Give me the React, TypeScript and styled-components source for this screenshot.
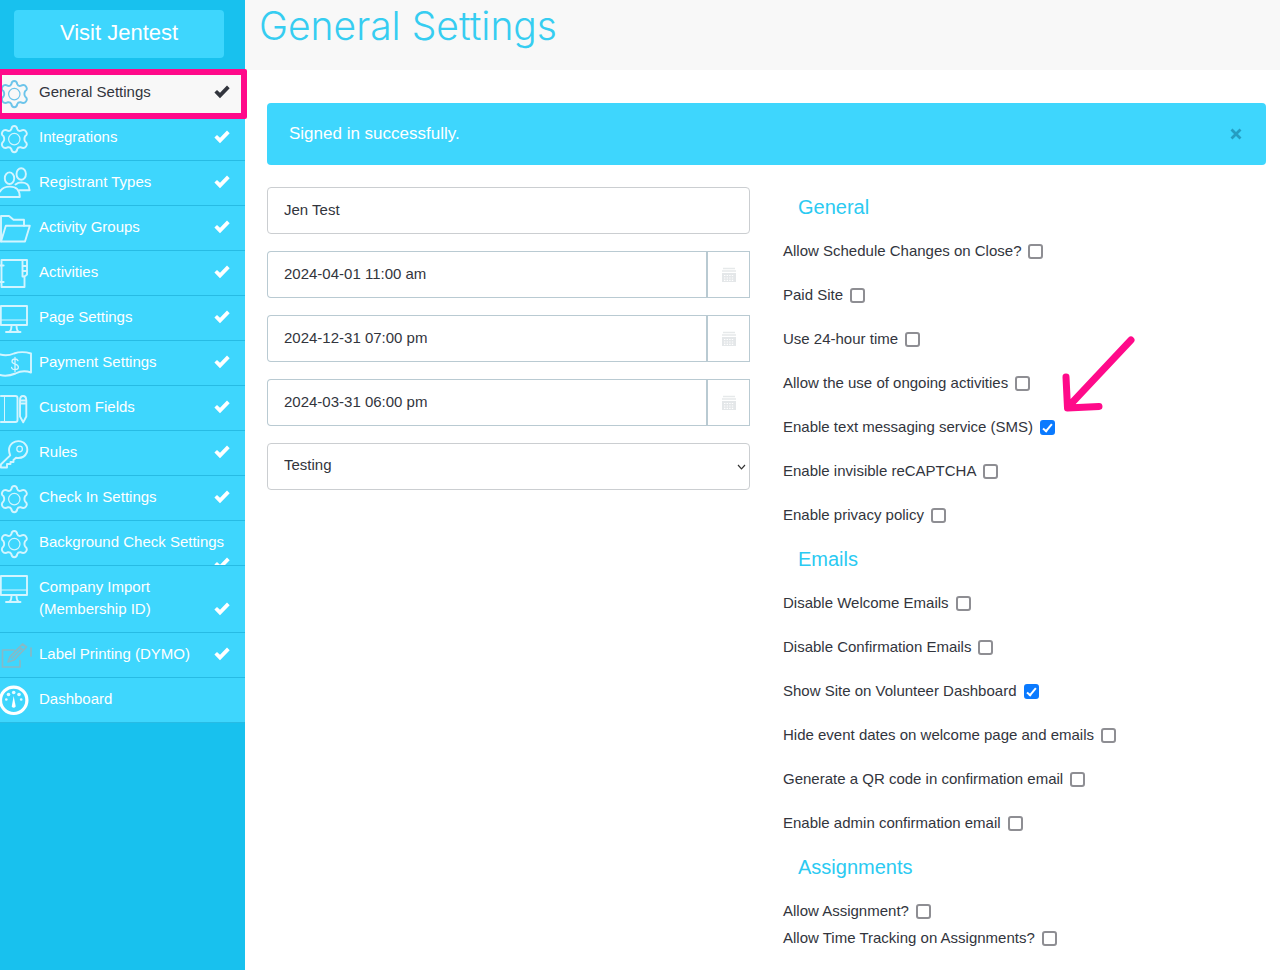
import React from "react";
import styled, { createGlobalStyle, css } from "styled-components";

const colors = {
  deep: "#18c1ee",
  bright: "#3ed6fd",
  line: "#27bbe4",
  pale: "#f8f8f8",
  ink: "#32353d",
  heading: "#36cdf1",
  marker: "#ff0a8a",
  fieldBorder: "#cbced1",
  dateBorder: "#b9cad2",
};

const GlobalStyle = createGlobalStyle`
  *, *::before, *::after { box-sizing: border-box; }
  body {
    margin: 0;
    background: #fff;
    color: ${colors.ink};
    font-family: "Liberation Sans", Arial, sans-serif;
    font-size: 15px;
    line-height: 24px;
  }
`;

const Layout = styled.div`
  display: flex;
  min-height: 100vh;
`;

const Sidebar = styled.aside`
  flex: 0 0 245px;
  background: ${colors.deep};
`;

const VisitLink = styled.a`
  display: block;
  margin: 10px 21px 13px 14px;
  padding-bottom: 2px;
  border-radius: 4px;
  background: ${colors.bright};
  color: #fff;
  font-size: 22px;
  line-height: 46px;
  text-align: center;
  text-decoration: none;
`;

const Menu = styled.ul`
  margin: 0;
  padding: 0;
  list-style: none;
`;

const MenuItem = styled.li`
  position: relative;
`;

const MenuLink = styled.a<{ $active?: boolean; $tall?: boolean }>`
  display: flex;
  flex-wrap: wrap;
  justify-content: space-between;
  align-items: flex-end;
  align-content: flex-start;
  position: relative;
  height: ${(p) => (p.$tall ? "67px" : "45px")};
  padding: 10px 15px 0 39px;
  overflow: hidden;
  border-bottom: 1px solid ${colors.line};
  background: ${colors.bright};
  color: #fff;
  line-height: 22px;
  text-decoration: none;
  ${(p) =>
    p.$active &&
    css`
      background: ${colors.pale};
      color: ${colors.ink};
    `}
`;

const MenuIcon = styled.svg<{ $active?: boolean }>`
  position: absolute;
  left: 0;
  top: 7px;
  width: 32px;
  height: 32px;
  overflow: visible;
  fill: none;
  stroke: ${(p) => (p.$active ? "#6cc4ea" : "#d3f5ff")};
  stroke-width: 1.9;
  stroke-linejoin: round;
  stroke-linecap: round;
`;

const CheckMark = styled.svg`
  width: 16px;
  height: 22px;
  margin-left: auto;
  fill: currentColor;
`;

const Highlight = styled.div`
  position: absolute;
  z-index: 1;
  inset: -2px -2px -3px -4px;
  border: 6px solid ${colors.marker};
  border-radius: 2px;
  pointer-events: none;
`;

const Main = styled.main`
  flex: 1;
  min-width: 0;
`;

const PageHeader = styled.header`
  height: 70px;
  padding: 2px 14px;
  background: ${colors.pale};
`;

const Title = styled.h1`
  margin: 0;
  color: ${colors.heading};
  font-family: Inter, "Liberation Sans", sans-serif;
  font-size: 39px;
  font-weight: 300;
  line-height: 48px;
`;

const Content = styled.div`
  padding: 33px 14px 16px 22px;
`;

const Alert = styled.div`
  display: flex;
  align-items: center;
  justify-content: space-between;
  height: 62px;
  margin-bottom: 22px;
  padding: 0 22px;
  border-radius: 4px;
  background: ${colors.bright};
  color: #fff;
  font-size: 17px;
`;

const CloseButton = styled.button`
  display: flex;
  padding: 2px;
  border: 0;
  background: none;
  color: #259dc2;
`;

const Columns = styled.form`
  display: grid;
  grid-template-columns: 1fr 1fr;
  gap: 33px;
`;

const Fields = styled.div`
  display: flex;
  flex-direction: column;
  gap: 17px;
`;

const fieldText = css`
  width: 100%;
  height: 47px;
  padding: 0 16px 3px;
  background: #fff;
  color: ${colors.ink};
  font: inherit;
`;

const TextInput = styled.input`
  ${fieldText}
  border: 1px solid ${colors.fieldBorder};
  border-radius: 4px;
`;

const DateGroup = styled.div`
  display: flex;
`;

const DateInput = styled.input`
  ${fieldText}
  flex: 1;
  border: 1px solid ${colors.dateBorder};
  border-right-width: 2px;
  border-radius: 4px 0 0 4px;
`;

const DateButton = styled.button`
  display: flex;
  flex: 0 0 42px;
  align-items: center;
  justify-content: center;
  padding: 0;
  border: 1px solid ${colors.dateBorder};
  border-left: 0;
  background: #fff;
`;

const SelectWrap = styled.div`
  position: relative;
`;

const Select = styled.select`
  ${fieldText}
  appearance: none;
  border: 1px solid ${colors.fieldBorder};
  border-radius: 4px;
`;

const SelectArrow = styled.svg`
  position: absolute;
  right: 4px;
  top: 20px;
  fill: none;
  stroke: #333;
  stroke-width: 1.2;
  pointer-events: none;
`;

const Options = styled.div`
  padding-top: 8px;
`;

const SectionTitle = styled.h2`
  margin: 0 0 20px;
  padding-left: 15px;
  color: #2bcaf2;
  font-size: 20px;
  font-weight: 300;
  line-height: 24px;
`;

const OptionRow = styled.div<{ $tight?: boolean }>`
  position: relative;
  margin-bottom: ${(p) => (p.$tight ? "3px" : "20px")};
`;

const OptionLabel = styled.label`
  display: inline-flex;
  align-items: center;
  gap: 7px;
`;

const CheckBox = styled.input`
  display: grid;
  place-items: center;
  appearance: none;
  width: 15px;
  height: 15px;
  margin: 0;
  border: 2px solid #8e8e93;
  border-radius: 3px;
  background: #fff;

  &:checked {
    border-color: #0a7aff;
    background: #0a7aff;
  }

  &:checked::after {
    content: "";
    width: 5px;
    height: 10px;
    margin-bottom: 3px;
    border: solid #fff;
    border-width: 0 2px 2px 0;
    transform: rotate(40deg);
  }
`;

const Arrow = styled.svg`
  position: absolute;
  left: 278px;
  bottom: 26px;
  fill: none;
  stroke: ${colors.marker};
  stroke-width: 7;
  stroke-linecap: round;
  stroke-linejoin: round;
  pointer-events: none;
`;

const icons: Record<string, React.ReactNode> = {
  gear: (
    <>
      <path d="M11.3 6.3 Q11.8 3 14.3 3 Q16.8 3 17.3 6.3 Q18 8.3 20.5 7.9 Q24.4 6 26 8.5 Q28 11.5 25.2 13 Q23.6 16 25.2 18.6 Q28 20.8 26 23.5 Q24.2 26 20.5 24.2 Q18 24 17.3 26 Q16.8 29.2 14.3 29.2 Q11.8 29.2 11.3 26 Q10.4 24 8.1 24.2 Q4.4 26 2.6 23.5 Q0.8 20.8 3.4 18.6 Q5 16 3.4 13 Q0.8 11.5 2.6 8.5 Q4.4 6 8.1 7.9 Q10.6 8.3 11.3 6.3 Z" />
      <circle cx="14.3" cy="16.1" r="5.7" strokeWidth="1.2" />
    </>
  ),
  people: (
    <>
      <ellipse cx="9.5" cy="10.2" rx="4.7" ry="5.8" />
      <ellipse cx="21.2" cy="6" rx="4.7" ry="5.8" />
      <path d="M0 29 H19.8 Q19.8 18.6 9.7 18.6 Q3 18.6 0 23.5 M15.5 16.5 Q18 14.4 21.5 14.4 Q29.3 14.6 29.6 22.2 H19.5" />
    </>
  ),
  folder: (
    <>
      <path d="M1 28.5 V3 H9 L13.500 6.8 H24 V12.7" />
      <path d="M1 28.5 L5.8 12.7 H29.8 L25 28.5 Z" />
    </>
  ),
  notebook: (
    <>
      <path d="M1.500 2 H27 V16.500 L24.500 18.500 V29 H1.500 Z M22.500 2 V18.500 H24.500 M22.500 8 H27 M22.500 13 H27" />
      <path d="M0 7.500 H3.500 M0 24 H3.500" strokeWidth="2.2" />
    </>
  ),
  monitor: (
    <>
      <path d="M0.8 3 H27 V22 H0.8 Z M11.5 22 Q11.5 27.5 9.5 28.5 M16.5 22 Q16.5 27.5 18.500 28.500 M6 29 H20.500" />
      <path d="M0.8 17 H27" strokeWidth="1" />
    </>
  ),
  money: (
    <>
      <path d="M0 6.5 Q7 8.5 14 5.5 Q22 2.8 31 5.500 V24.500 Q23 21.500 15.500 25.500 Q7 29 0 27" />
      <path d="M18 12.7 Q17.3 11 15 11 Q12 11 12 13.3 Q12 15.3 15 16.1 Q18.4 16.9 18.4 19.300 Q18.4 21.700 15 21.700 Q12 21.700 11.6 19.500 M15 9.300 V23.500" strokeWidth="1.3" />
    </>
  ),
  bookPen: (
    <>
      <path d="M0.8 3 H15.5 Q17.5 3 17.5 5 V27 Q17.500 29 15.500 29 H0.8 M20 7.500 Q20 3 23 3 Q26.3 3 26.3 7.500 V23.500 L23.2 29.300 L20 23.500 Z M20 7.500 H26.3 M20 10.500 H26.3" />
      <path d="M4.500 3 V29" strokeWidth="1" />
    </>
  ),
  key: (
    <>
      <path d="M10.2 17.4 Q7 9.5 12.5 5 Q17.5 1.5 23.5 4.5 Q28.7 8.5 26.8 14.5 Q24 21 16 19.8 L13.5 22 V24 H10.5 V26 H7 V29.500 H0.8 V26.5 Z" />
      <circle cx="19.6" cy="11" r="2.8" strokeWidth="1.3" />
    </>
  ),
  edit: (
    <g stroke="#86b9c6" strokeWidth="1.7">
      <path d="M14 10 H2.500 V27 H20 V20.500" />
      <path d="M10 16.500 L22.500 4 L26.500 7 L14 20 L8 22 Z M19.500 7 L23.500 10.500 M12 18 L21 9 M31 8 V16" />
    </g>
  ),
  gauge: (
    <>
      <circle cx="13.7" cy="15.3" r="13.2" stroke="#fff" strokeWidth="3.2" />
      <path d="M13.700 11 L11.700 21.500 Q13.700 24 15.700 21.500 Z" fill="#fff" stroke="none" />
      <g fill="#e6faff" stroke="none">
        <circle cx="13.7" cy="7.5" r="1.8" />
        <circle cx="8.500" cy="9.500" r="1.8" />
        <circle cx="19" cy="9.500" r="1.8" />
        <circle cx="6.3" cy="14.500" r="1.3" />
        <circle cx="21.2" cy="14.500" r="1.3" />
      </g>
    </>
  ),
};

type Entry = { label: React.ReactNode; icon: string; done?: boolean; active?: boolean; tall?: boolean };

const menu: Entry[] = [
  { label: "General Settings", icon: "gear", done: true, active: true },
  { label: "Integrations", icon: "gear", done: true },
  { label: "Registrant Types", icon: "people", done: true },
  { label: "Activity Groups", icon: "folder", done: true },
  { label: "Activities", icon: "notebook", done: true },
  { label: "Page Settings", icon: "monitor", done: true },
  { label: "Payment Settings", icon: "money", done: true },
  { label: "Custom Fields", icon: "bookPen", done: true },
  { label: "Rules", icon: "key", done: true },
  { label: "Check In Settings", icon: "gear", done: true },
  { label: "Background Check Settings", icon: "gear", done: true },
  { label: <>Company Import<br />(Membership ID)</>, icon: "monitor", done: true, tall: true },
  { label: "Label Printing (DYMO)", icon: "edit", done: true },
  { label: "Dashboard", icon: "gauge" },
];

type Option = { label: string; checked?: boolean; tight?: boolean; arrow?: boolean };

const sections: { title: string; options: Option[] }[] = [
  {
    title: "General",
    options: [
      { label: "Allow Schedule Changes on Close?" },
      { label: "Paid Site" },
      { label: "Use 24-hour time" },
      { label: "Allow the use of ongoing activities" },
      { label: "Enable text messaging service (SMS)", checked: true, arrow: true },
      { label: "Enable invisible reCAPTCHA" },
      { label: "Enable privacy policy" },
    ],
  },
  {
    title: "Emails",
    options: [
      { label: "Disable Welcome Emails" },
      { label: "Disable Confirmation Emails" },
      { label: "Show Site on Volunteer Dashboard", checked: true },
      { label: "Hide event dates on welcome page and emails" },
      { label: "Generate a QR code in confirmation email" },
      { label: "Enable admin confirmation email" },
    ],
  },
  {
    title: "Assignments",
    options: [
      { label: "Allow Assignment?", tight: true },
      { label: "Allow Time Tracking on Assignments?", tight: true },
    ],
  },
];

const dates = [
  { name: "Start date", value: "2024-04-01 11:00 am" },
  { name: "End date", value: "2024-12-31 07:00 pm" },
  { name: "Opening date", value: "2024-03-31 06:00 pm" },
];

const CalendarIcon = () => (
  <svg width="16" height="16" viewBox="0 0 16 16" aria-hidden="true">
    <path d="M2 1.500 H14 M1 4 H15" stroke="#e6e9ea" strokeWidth="1.6" />
    <rect x="1" y="6" width="14" height="9" fill="#e4e7e9" />
    <path d="M3 8.5 H13 M3 11 H13 M3 13.3 H13" stroke="#fff" strokeWidth="1.2" strokeDasharray="1.4 1.2" />
  </svg>
);

export default function App() {
  return (
    <>
      <GlobalStyle />
      <Layout>
        <Sidebar>
          <VisitLink href="#visit">Visit Jentest</VisitLink>
          <nav>
            <Menu>
              {menu.map((item, i) => (
                <MenuItem key={i}>
                  <MenuLink href="#" $active={item.active} $tall={item.tall}>
                    <MenuIcon viewBox="0 0 32 32" $active={item.active} aria-hidden="true">
                      {icons[item.icon]}
                    </MenuIcon>
                    <span>{item.label}</span>
                    {item.done && (
                      <CheckMark viewBox="0 0 16 22" aria-hidden="true">
                        <path d="M0.4 11.5 L3 8.9 L6 11.7 L13 4.6 L15.7 7.2 L6 17.2 Z" />
                      </CheckMark>
                    )}
                  </MenuLink>
                  {item.active && <Highlight />}
                </MenuItem>
              ))}
            </Menu>
          </nav>
        </Sidebar>
        <Main>
          <PageHeader>
            <Title>General Settings</Title>
          </PageHeader>
          <Content>
            <Alert role="status">
              <span>Signed in successfully.</span>
              <CloseButton type="button" aria-label="Close">
                <svg width="12" height="12" viewBox="0 0 12 12" aria-hidden="true">
                  <path d="M1.5 1.5 L10.5 10.5 M10.5 1.5 L1.5 10.5" stroke="currentColor" strokeWidth="2.8" />
                </svg>
              </CloseButton>
            </Alert>
            <Columns>
              <Fields>
                <TextInput aria-label="Site name" defaultValue="Jen Test" />
                {dates.map((d) => (
                  <DateGroup key={d.name}>
                    <DateInput aria-label={d.name} defaultValue={d.value} />
                    <DateButton type="button" aria-label={`Pick ${d.name.toLowerCase()}`}>
                      <CalendarIcon />
                    </DateButton>
                  </DateGroup>
                ))}
                <SelectWrap>
                  <Select aria-label="Site status" defaultValue="Testing">
                    <option>Testing</option>
                  </Select>
                  <SelectArrow width="9" height="8" viewBox="0 0 9 8" aria-hidden="true">
                    <path d="M1 2 L4.5 5.8 L8 2" />
                  </SelectArrow>
                </SelectWrap>
              </Fields>
              <Options>
                {sections.map((s) => (
                  <section key={s.title}>
                    <SectionTitle>{s.title}</SectionTitle>
                    {s.options.map((o) => (
                      <OptionRow key={o.label} $tight={o.tight}>
                        <OptionLabel>
                          {o.label}
                          <CheckBox type="checkbox" defaultChecked={o.checked} />
                        </OptionLabel>
                        {o.arrow && (
                          <Arrow width="76" height="78" viewBox="0 0 76 78" aria-hidden="true">
                            <path d="M70 5 L7 72 M5 42 L6.500 73 L38 71.500" />
                          </Arrow>
                        )}
                      </OptionRow>
                    ))}
                  </section>
                ))}
              </Options>
            </Columns>
          </Content>
        </Main>
      </Layout>
    </>
  );
}
